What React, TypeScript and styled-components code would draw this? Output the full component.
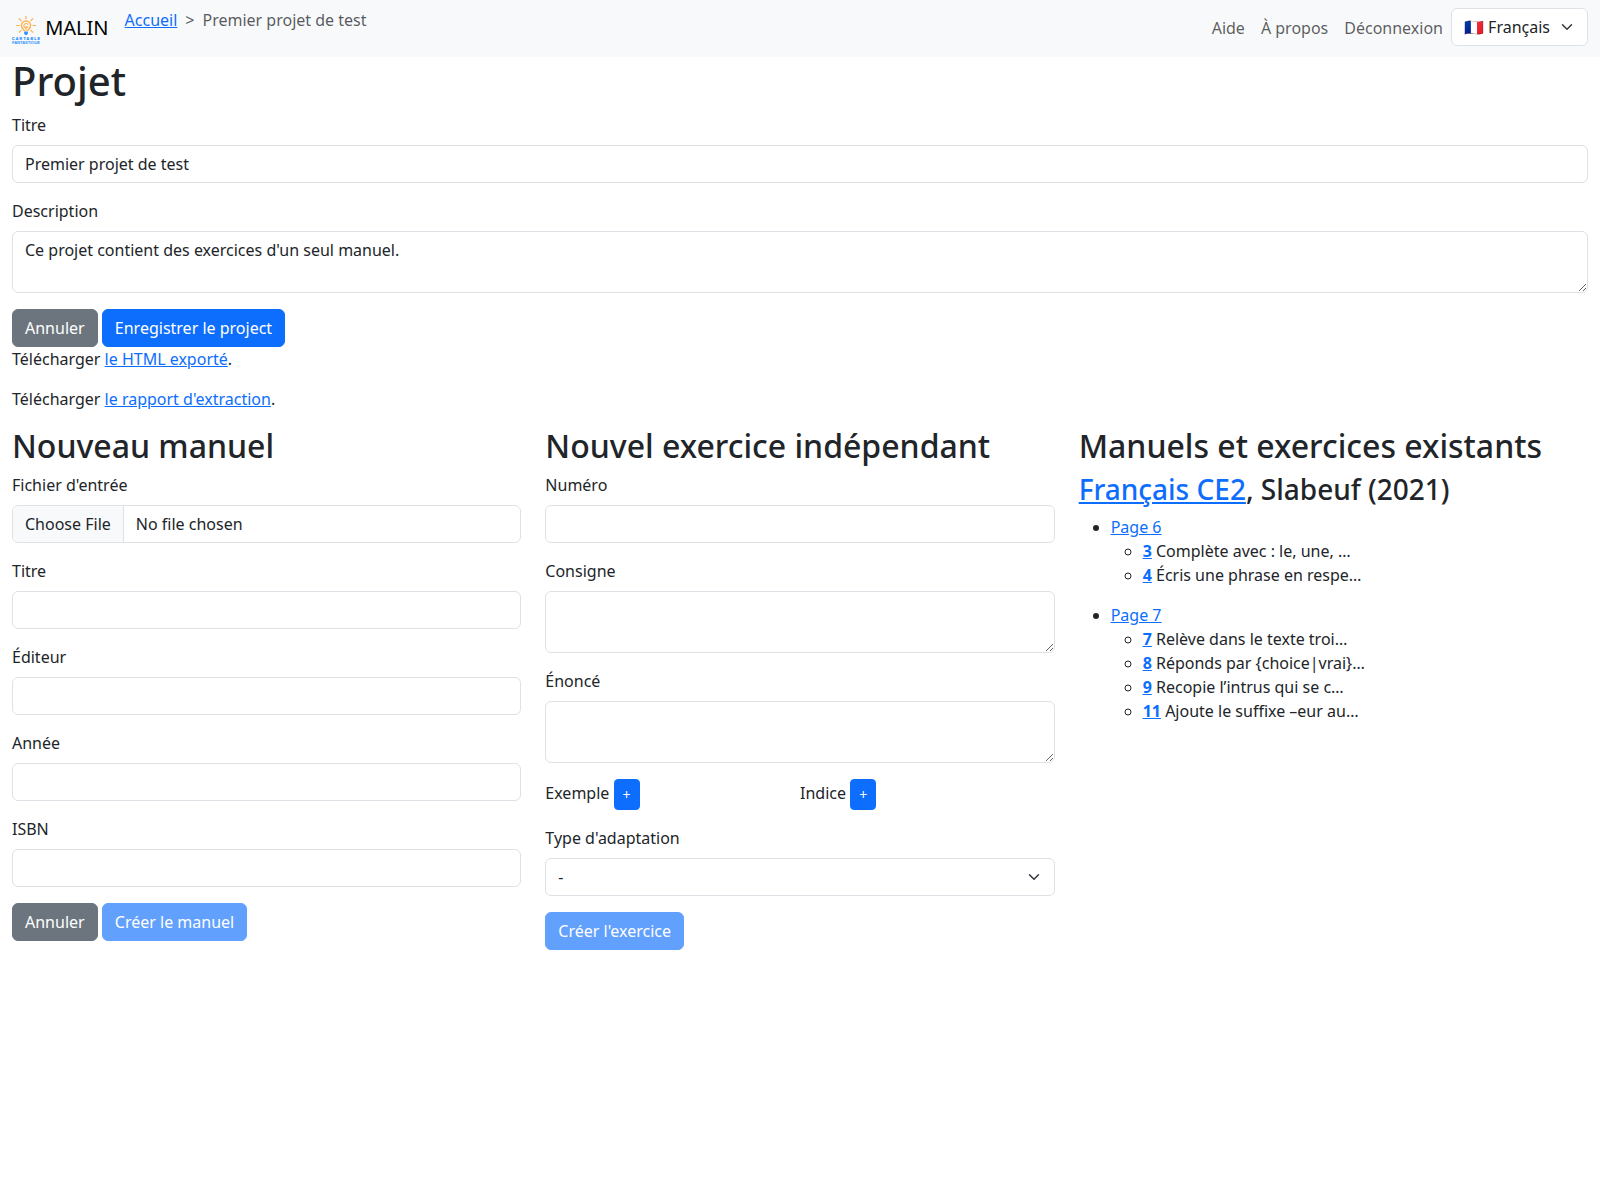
import React from 'react';
import styled, { createGlobalStyle, css } from 'styled-components';

const GlobalStyle = createGlobalStyle`
  *, *::before, *::after { box-sizing: border-box; }
  body {
    margin: 0;
    font-family: "Noto Sans", "Liberation Sans", Arial, "Noto Color Emoji", sans-serif;
    font-size: 16px;
    line-height: 1.5;
    color: #212529;
    background: #fff;
  }
  input, textarea, select, button { font-family: inherit; margin: 0; }
`;

const Navbar = styled.nav`
  display: flex;
  align-items: flex-start;
  height: 57px;
  padding: 8px 12px;
  background: #f8f9fa;
`;

const Brand = styled.a`
  display: flex;
  align-items: center;
  gap: 5.2px;
  height: 40px;
  margin-right: 16px;
  font-size: 20px;
  line-height: 30px;
  color: #000;
  text-decoration: none;
`;

const LogoSvg = styled.svg`
  display: block;
  margin-top: 4px;
`;

const Breadcrumb = styled.ol`
  display: flex;
  margin: 0;
  padding: 0;
  list-style: none;
`;

const Crumb = styled.li`
  color: rgba(33, 37, 41, 0.75);

  & + &::before {
    content: ">";
    padding: 0 8px;
  }
`;

const NavLinks = styled.div`
  display: flex;
  margin-left: auto;
`;

const NavLink = styled.a`
  padding: 8px;
  color: rgba(0, 0, 0, 0.65);
  text-decoration: none;
`;

const Link = styled.a`
  color: #0d6efd;
  text-decoration: underline;
`;

const Page = styled.main`
  padding: 0 12px;
`;

const heading = css`
  margin: 0 0 8px;
  font-weight: 500;
  line-height: 1.2;
`;

const Title = styled.h1`
  ${heading}
  font-size: 40px;
`;

const SectionTitle = styled.h2`
  ${heading}
  font-size: 32px;
`;

const BookTitle = styled.h3`
  ${heading}
  font-size: 28px;
`;

const Field = styled.div`
  margin-bottom: 16px;
`;

const Label = styled.label`
  display: block;
  margin-bottom: 8px;
`;

const control = css`
  display: block;
  width: 100%;
  padding: 6px 12px;
  border: 1px solid #dee2e6;
  border-radius: 6px;
  background-color: #fff;
  color: #212529;
  font-size: 16px;
  font-weight: 400;
  line-height: 1.5;
  appearance: none;
`;

const Input = styled.input`
  ${control}
  height: 38px;

  &[type="file"] { overflow: hidden; }

  &::file-selector-button {
    margin: -6px 12px -6px -12px;
    padding: 6px 12px;
    border: 0 solid #dee2e6;
    border-right-width: 1px;
    border-radius: 0;
    background: #f8f9fa;
    color: #212529;
    font: inherit;
  }
`;

const TextArea = styled.textarea`
  ${control}
  height: 62px;
  resize: vertical;
`;

const chevron = `url("data:image/svg+xml,%3csvg xmlns='http://www.w3.org/2000/svg' viewBox='0 0 16 16'%3e%3cpath fill='none' stroke='%23343a40' stroke-linecap='round' stroke-linejoin='round' stroke-width='2' d='m2 5 6 6 6-6'/%3e%3c/svg%3e")`;

const Select = styled.select<{ $compact?: boolean }>`
  ${control}
  height: 38px;
  padding-right: 36px;
  background-image: ${chevron};
  background-repeat: no-repeat;
  background-position: right 12px center;
  background-size: 16px 12px;
  ${({ $compact }) => $compact && css`
    width: 137px;
  `}
`;

const Actions = styled.div`
  display: flex;
  gap: 4.16px;
`;

const Button = styled.button<{ $tone?: 'primary' | 'secondary'; $small?: boolean }>`
  padding: ${({ $small }) => ($small ? '4px 8px' : '6px 12px')};
  border: 1px solid transparent;
  border-color: ${({ $tone }) => ($tone === 'secondary' ? '#6c757d' : '#0d6efd')};
  border-radius: ${({ $small }) => ($small ? '4px' : '6px')};
  background: ${({ $tone }) => ($tone === 'secondary' ? '#6c757d' : '#0d6efd')};
  color: #fff;
  font-size: ${({ $small }) => ($small ? '14px' : '16px')};
  line-height: 1.5;
  vertical-align: middle;

  &:disabled { opacity: 0.65; }
`;

const Paragraph = styled.p`
  margin: 0 0 16px;
`;

const Columns = styled.div`
  display: grid;
  grid-template-columns: repeat(3, minmax(0, 1fr));
  gap: 24px;
`;

const OptionalParts = styled.div`
  display: grid;
  grid-template-columns: 1fr 1fr;
  height: 31px;
  margin-bottom: 16px;
`;

const PageList = styled.ul`
  margin: 0 0 16px;
  padding-left: 32px;
`;

const ExerciseList = styled.ul`
  margin: 0;
  padding-left: 32px;

  li:not(:last-child) > & { margin-bottom: 16px; }
`;

const ExerciseLink = styled(Link)`
  font-weight: 700;
`;

const rays = [-225, -180, -135, -90, -45, 0, 45];

function Logo() {
  return (
    <LogoSvg width="28" height="28" viewBox="0 0 28 28">
      <g stroke="#fdb04a" strokeLinecap="round" fill="none">
        {rays.map((angle) => (
          <path key={angle} d="M6.9 0H9.5" strokeWidth="1.2" transform={`translate(14 9.5) rotate(${angle})`} />
        ))}
        <path d="M12.2 14.6C12 13.4 9.4 12.6 9.4 9.6a4.6 4.6 0 0 1 9.2 0c0 3-2.6 3.8-2.8 5" strokeWidth="1.4" />
        <path d="M15.9 8.4a2.2 2.2 0 1 0 .1 2.4M14 10.3v4" strokeWidth="1.1" />
      </g>
      <path d="M12.2 15.4h3.6v2.2l-1 1.5h-1.6l-1-1.5z" fill="#2f91fa" />
      <g fill="#2f91fa" fontFamily="Liberation Sans, sans-serif" fontWeight="700">
        <text x="0" y="23.9" fontSize="3.6" textLength="28" stroke="#2f91fa" strokeWidth=".2">CARTABLE</text>
        <text x="0" y="28" fontSize="4" textLength="28" lengthAdjust="spacingAndGlyphs">FANTASTIQUE</text>
      </g>
    </LogoSvg>
  );
}

function TextField({ label, value }: { label: string; value?: string }) {
  return (
    <Field>
      <Label>{label}</Label>
      <Input type="text" defaultValue={value} />
    </Field>
  );
}

function AreaField({ label, value }: { label: string; value?: string }) {
  return (
    <Field>
      <Label>{label}</Label>
      <TextArea rows={2} defaultValue={value} spellCheck={false} />
    </Field>
  );
}

const pages = [
  {
    name: 'Page 6',
    exercises: [
      ['3', 'Complète avec : le, une, …'],
      ['4', 'Écris une phrase en respe…'],
    ],
  },
  {
    name: 'Page 7',
    exercises: [
      ['7', 'Relève dans le texte troi…'],
      ['8', 'Réponds par {choice|vrai}…'],
      ['9', 'Recopie l’intrus qui se c…'],
      ['11', 'Ajoute le suffixe –eur au…'],
    ],
  },
];

export default function App() {
  return (
    <>
      <GlobalStyle />
      <Navbar>
        <Brand href="#"><Logo />MALIN</Brand>
        <Breadcrumb>
          <Crumb><Link href="#">Accueil</Link></Crumb>
          <Crumb>Premier projet de test</Crumb>
        </Breadcrumb>
        <NavLinks>
          <NavLink href="#">Aide</NavLink>
          <NavLink href="#">À propos</NavLink>
          <NavLink href="#">Déconnexion</NavLink>
        </NavLinks>
        <Select $compact defaultValue="fr">
          <option value="fr">🇫🇷 Français</option>
        </Select>
      </Navbar>
      <Page>
        <Title>Projet</Title>
        <TextField label="Titre" value="Premier projet de test" />
        <AreaField label="Description" value="Ce projet contient des exercices d'un seul manuel." />
        <Actions>
          <Button $tone="secondary">Annuler</Button>
          <Button>Enregistrer le project</Button>
        </Actions>
        <Paragraph>Télécharger <Link href="#">le HTML exporté</Link>.</Paragraph>
        <Paragraph>Télécharger <Link href="#">le rapport d'extraction</Link>.</Paragraph>
        <Columns>
          <section>
            <SectionTitle>Nouveau manuel</SectionTitle>
            <Field>
              <Label>Fichier d'entrée</Label>
              <Input type="file" />
            </Field>
            <TextField label="Titre" />
            <TextField label="Éditeur" />
            <TextField label="Année" />
            <TextField label="ISBN" />
            <Actions>
              <Button $tone="secondary">Annuler</Button>
              <Button disabled>Créer le manuel</Button>
            </Actions>
          </section>
          <section>
            <SectionTitle>Nouvel exercice indépendant</SectionTitle>
            <TextField label="Numéro" />
            <AreaField label="Consigne" />
            <AreaField label="Énoncé" />
            <OptionalParts>
              <div>Exemple <Button $small>+</Button></div>
              <div>Indice <Button $small>+</Button></div>
            </OptionalParts>
            <Field>
              <Label>Type d'adaptation</Label>
              <Select defaultValue="-">
                <option value="-">-</option>
              </Select>
            </Field>
            <Actions>
              <Button disabled>Créer l'exercice</Button>
            </Actions>
          </section>
          <section>
            <SectionTitle>Manuels et exercices existants</SectionTitle>
            <BookTitle><Link href="#">Français CE2</Link>, Slabeuf (2021)</BookTitle>
            <PageList>
              {pages.map((page) => (
                <li key={page.name}>
                  <Link href="#">{page.name}</Link>
                  <ExerciseList>
                    {page.exercises.map(([number, text]) => (
                      <li key={number}>
                        <ExerciseLink href="#">{number}</ExerciseLink> {text}
                      </li>
                    ))}
                  </ExerciseList>
                </li>
              ))}
            </PageList>
          </section>
        </Columns>
      </Page>
    </>
  );
}
